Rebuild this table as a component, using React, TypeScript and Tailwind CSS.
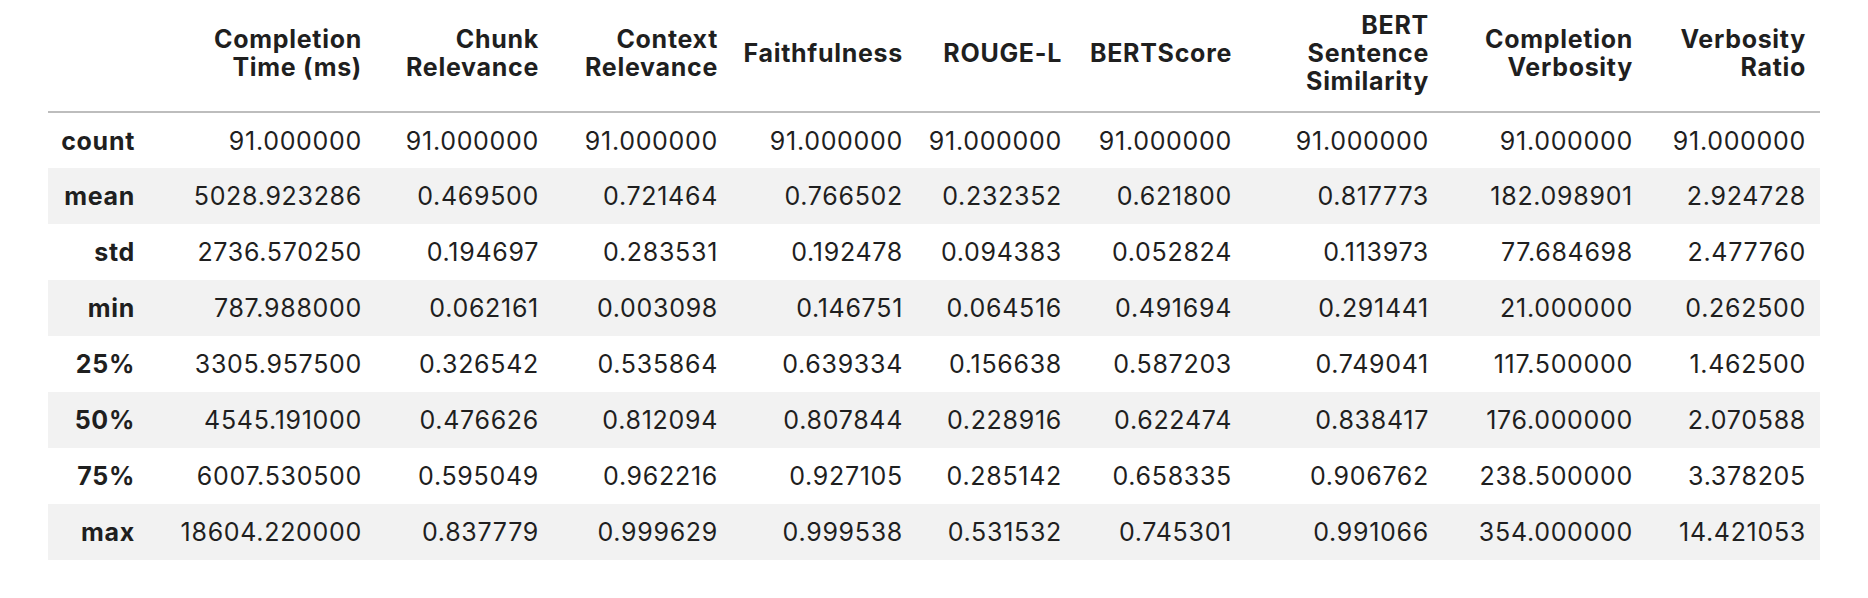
import React from "react";

const columns: { lines: string[]; width: string }[] = [
  { lines: ["Completion", "Time (ms)"], width: "w-[229px]" },
  { lines: ["Chunk", "Relevance"], width: "w-[177px]" },
  { lines: ["Context", "Relevance"], width: "w-[179px]" },
  { lines: ["Faithfulness"], width: "w-[185px]" },
  { lines: ["ROUGE-L"], width: "w-[159px]" },
  { lines: ["BERTScore"], width: "w-[170px]" },
  { lines: ["BERT", "Sentence", "Similarity"], width: "w-[197px]" },
  { lines: ["Completion", "Verbosity"], width: "w-[204px]" },
  { lines: ["Verbosity", "Ratio"], width: "w-[173px]" },
];

const rows: [string, string[]][] = [
  ["count", ["91.000000", "91.000000", "91.000000", "91.000000", "91.000000", "91.000000", "91.000000", "91.000000", "91.000000"]],
  ["mean", ["5028.923286", "0.469500", "0.721464", "0.766502", "0.232352", "0.621800", "0.817773", "182.098901", "2.924728"]],
  ["std", ["2736.570250", "0.194697", "0.283531", "0.192478", "0.094383", "0.052824", "0.113973", "77.684698", "2.477760"]],
  ["min", ["787.988000", "0.062161", "0.003098", "0.146751", "0.064516", "0.491694", "0.291441", "21.000000", "0.262500"]],
  ["25%", ["3305.957500", "0.326542", "0.535864", "0.639334", "0.156638", "0.587203", "0.749041", "117.500000", "1.462500"]],
  ["50%", ["4545.191000", "0.476626", "0.812094", "0.807844", "0.228916", "0.622474", "0.838417", "176.000000", "2.070588"]],
  ["75%", ["6007.530500", "0.595049", "0.962216", "0.927105", "0.285142", "0.658335", "0.906762", "238.500000", "3.378205"]],
  ["max", ["18604.220000", "0.837779", "0.999629", "0.999538", "0.531532", "0.745301", "0.991066", "354.000000", "14.421053"]],
];

export default function App() {
  return (
    <div className="w-[1868px] h-[598px] bg-white pl-[48px] font-['Inter','Liberation_Sans',sans-serif] text-[25px] leading-[28px] tracking-[0.7px] text-[#1f1f1f]">
      <table className="table-fixed border-collapse w-[1772px]">
        <colgroup>
          <col className="w-[99px]" />
          {columns.map((c, i) => (
            <col key={i} className={c.width} />
          ))}
        </colgroup>
        <thead>
          <tr className="h-[112px] border-b-2 border-[#bdbdbd]">
            <th className="pr-[14px]" />
            {columns.map((c, i) => (
              <th key={i} className="pr-[14px] pb-[6px] text-right align-middle font-bold whitespace-nowrap">
                {c.lines.map((l, j) => (
                  <div key={j}>{l}</div>
                ))}
              </th>
            ))}
          </tr>
        </thead>
        <tbody>
          {rows.map(([label, vals], r) => (
            <tr key={label} className={`h-[56px] ${r % 2 === 1 ? "bg-[#f2f2f2]" : "bg-white"}`}>
              <th className="pr-[12px] text-right font-bold">{label}</th>
              {vals.map((v, i) => (
                <td key={i} className="pr-[14px] text-right whitespace-nowrap">
                  {v}
                </td>
              ))}
            </tr>
          ))}
        </tbody>
      </table>
    </div>
  );
}
